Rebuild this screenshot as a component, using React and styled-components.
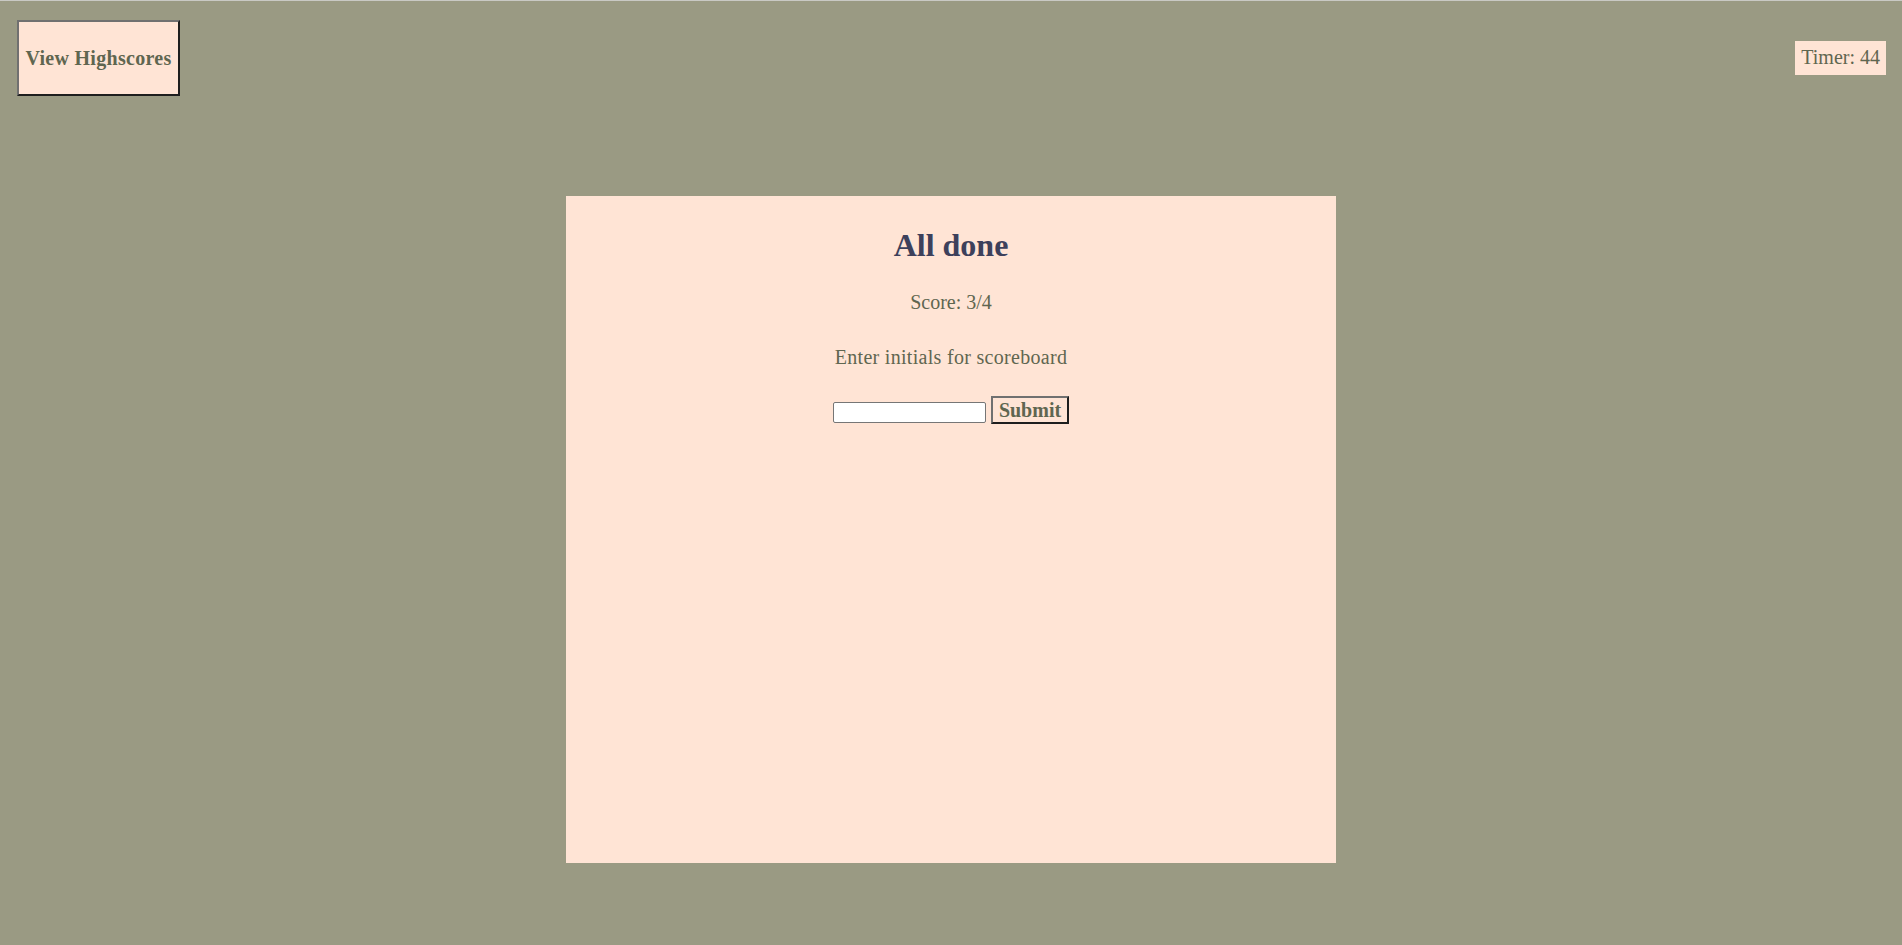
import React, { useState } from 'react';
import styled, { createGlobalStyle } from 'styled-components';

const GlobalStyle = createGlobalStyle`
  html, body {
    margin: 0;
    padding: 0;
  }
  body {
    font-family: "Liberation Serif", "Times New Roman", serif;
    background: #9a9a83;
  }
  * {
    box-sizing: border-box;
  }
`;

const Page = styled.div`
  min-height: 100vh;
  border-top: 1px solid #c9c9c4;
  background: #9a9a83;
  color: #5f6650;
`;

const Header = styled.header`
  display: flex;
  justify-content: space-between;
  align-items: center;
  padding: 19px 16px 0 17px;
`;

const HighscoresButton = styled.button`
  width: 163px;
  height: 76px;
  padding: 0 4px;
  background: #ffe4d5;
  color: #5f6650;
  font-family: inherit;
  font-size: 20px;
  font-weight: bold;
  letter-spacing: 0.3px;
  border: 2px solid;
  border-color: #707070 #1e1e1e #1e1e1e #707070;
  cursor: pointer;
`;

const Timer = styled.div`
  background: #ffe4d5;
  font-size: 20px;
  padding: 5px 6px 6px;
  line-height: 23px;
`;

const Card = styled.main`
  width: 770px;
  height: 667px;
  margin: 100px auto 0;
  background: #ffe4d5;
  display: flex;
  flex-direction: column;
  align-items: center;
`;

const Title = styled.h1`
  margin: 31px 0 0;
  font-size: 32px;
  color: #3d405b;
`;

const Line = styled.p`
  margin: ${p => p.$gap}px 0 0;
  font-size: 20px;
  letter-spacing: ${p => p.$spread || 0}px;
`;

const Form = styled.form`
  display: flex;
  align-items: flex-end;
  gap: 5px;
  margin-top: 27px;
`;

const Initials = styled.input`
  width: 153px;
  height: 21px;
  margin-bottom: 1px;
  border: 1px solid #767676;
  border-radius: 2px;
  background: #fff;
  padding: 1px 2px;
  font-size: 13px;
`;

const SubmitButton = styled.button`
  width: 78px;
  height: 28px;
  padding: 0 4px;
  background: #ffe4d5;
  color: #5f6650;
  font-family: inherit;
  font-size: 20px;
  font-weight: bold;
  border: 2px solid;
  border-color: #707070 #1e1e1e #1e1e1e #707070;
  line-height: 22px;
`;

export default function App() {
  const [initials, setInitials] = useState('');
  return (
    <Page>
      <GlobalStyle />
      <Header>
        <HighscoresButton>View Highscores</HighscoresButton>
        <Timer>Timer: 44</Timer>
      </Header>
      <Card>
        <Title>All done</Title>
        <Line $gap={27}>Score: 3/4</Line>
        <Line $gap={32} $spread={0.3}>Enter initials for scoreboard</Line>
        <Form onSubmit={e => e.preventDefault()}>
          <Initials value={initials} onChange={e => setInitials(e.target.value)} />
          <SubmitButton type="submit">Submit</SubmitButton>
        </Form>
      </Card>
    </Page>
  );
}
